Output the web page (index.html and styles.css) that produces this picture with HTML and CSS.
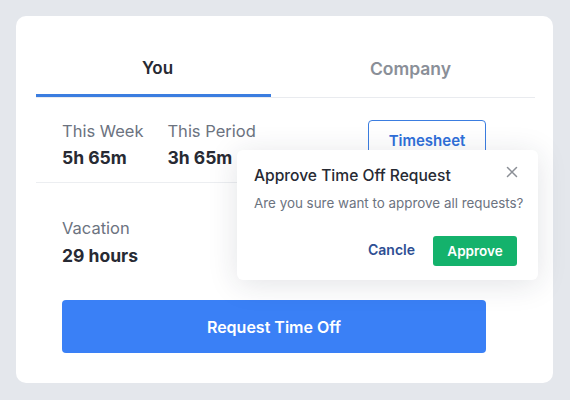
FILE: index.html
```html
<!DOCTYPE html>
<html>
<head>
<meta charset="utf-8">
<link rel="stylesheet" href="styles.css">
</head>
<body>
<div class="card">
  <div class="tabs">
    <div class="tab active">You</div>
    <div class="tab other">Company</div>
  </div>
  <div class="stats">
    <div class="stat">
      <div class="label">This Week</div>
      <div class="value">5h 65m</div>
    </div>
    <div class="stat">
      <div class="label">This Period</div>
      <div class="value">3h 65m</div>
    </div>
    <button class="timesheet">Timesheet</button>
  </div>
  <div class="vacation">
    <div class="label">Vacation</div>
    <div class="value">29 hours</div>
  </div>
  <button class="request">Request Time Off</button>

  <div class="popup">
    <div class="popup-head">
      <div class="popup-title">Approve Time Off Request</div>
      <svg class="close" width="12" height="12" viewBox="0 0 12 12"><path d="M1.5 1.5L10.5 10.5M10.5 1.5L1.5 10.5" stroke="#8b8f96" stroke-width="1.5" stroke-linecap="round"/></svg>
    </div>
    <div class="popup-text">Are you sure want to approve all requests?</div>
    <div class="popup-actions">
      <button class="cancel">Cancle</button>
      <button class="approve">Approve</button>
    </div>
  </div>
</div>
</body>
</html>
```

FILE: styles.css
```css
* { box-sizing: border-box; }
html, body { margin: 0; padding: 0; }
body {
  width: 570px;
  height: 400px;
  background: #e4e7ec;
  padding: 16px 17px 17px 16px;
  font-family: Inter, "Open Sans", sans-serif;
  color: #272a33;
}
.card {
  position: relative;
  background: #fff;
  border-radius: 10px;
  height: 367px;
  padding: 20px 18px 0 20px;
}
.tabs {
  display: flex;
  border-bottom: 1px solid #e9ebef;
}
.tab {
  flex: 1;
  height: 61px;
  display: flex;
  align-items: center;
  justify-content: center;
  font-size: 17px;
  font-weight: 600;
  color: #8a8f98;
  padding-top: 3px;
}
.tab.active {
  color: #272a33;
  box-shadow: inset 0 -3px 0 #3b7de0;
  flex: 0 0 235px;
  padding-left: 8px;
}
.tab.other {
  font-size: 17.5px;
  padding-left: 15px;
}
.stats {
  display: flex;
  align-items: flex-start;
  padding: 22px 49px 0 26px;
  height: 85px;
  border-bottom: 1px solid #eceef1;
}
.stat { margin-right: 24px; }
.label {
  font-size: 16.5px;
  color: #6c7380;
  line-height: 22px;
}
.value {
  font-size: 17.5px;
  font-weight: 700;
  color: #272a33;
  line-height: 22px;
  margin-top: 5px;
}
.timesheet {
  margin-left: auto;
  margin-top: 0;
  width: 118px;
  height: 40px;
  border: 1.5px solid #3b7de0;
  border-radius: 4px;
  background: #fff;
  color: #2f6fd9;
  font-family: inherit;
  font-size: 15px;
  font-weight: 600;
}
.vacation {
  padding: 34px 0 0 26px;
  height: 117px;
}
.vacation .value { margin-top: 6px; }
.request {
  display: block;
  margin-left: 26px;
  width: 424px;
  height: 53px;
  border: none;
  border-radius: 4px;
  background: #3a80f6;
  color: #fff;
  font-family: inherit;
  font-size: 16px;
  font-weight: 600;
}
.popup {
  position: absolute;
  left: 221px;
  top: 134px;
  width: 301px;
  height: 130px;
  background: #fff;
  border-radius: 6px;
  box-shadow: 0 4px 30px rgba(30, 40, 60, 0.13);
  padding: 15px 14px 0 17px;
}
.popup-head {
  display: flex;
  justify-content: space-between;
  align-items: center;
}
.popup-title {
  font-size: 15.6px;
  font-weight: 500;
  color: #272a33;
  line-height: 22px;
}
.close { margin-top: -8px; margin-right: 6px; }
.popup-text {
  font-size: 13.4px;
  color: #6c7380;
  margin-top: 7px;
  line-height: 18px;
  white-space: nowrap;
}
.popup-actions {
  display: flex;
  justify-content: flex-end;
  align-items: center;
  margin-top: 24px;
  padding-right: 7px;
}
.cancel {
  background: none;
  border: none;
  color: #2d4e93;
  font-family: inherit;
  font-size: 14px;
  font-weight: 600;
  margin-right: 18px;
  padding: 0;
  margin-top: -4px;
}
.approve {
  width: 84px;
  height: 30px;
  border: none;
  border-radius: 3px;
  background: #14b26c;
  color: #fff;
  font-family: inherit;
  font-size: 13.5px;
  font-weight: 600;
}
```
